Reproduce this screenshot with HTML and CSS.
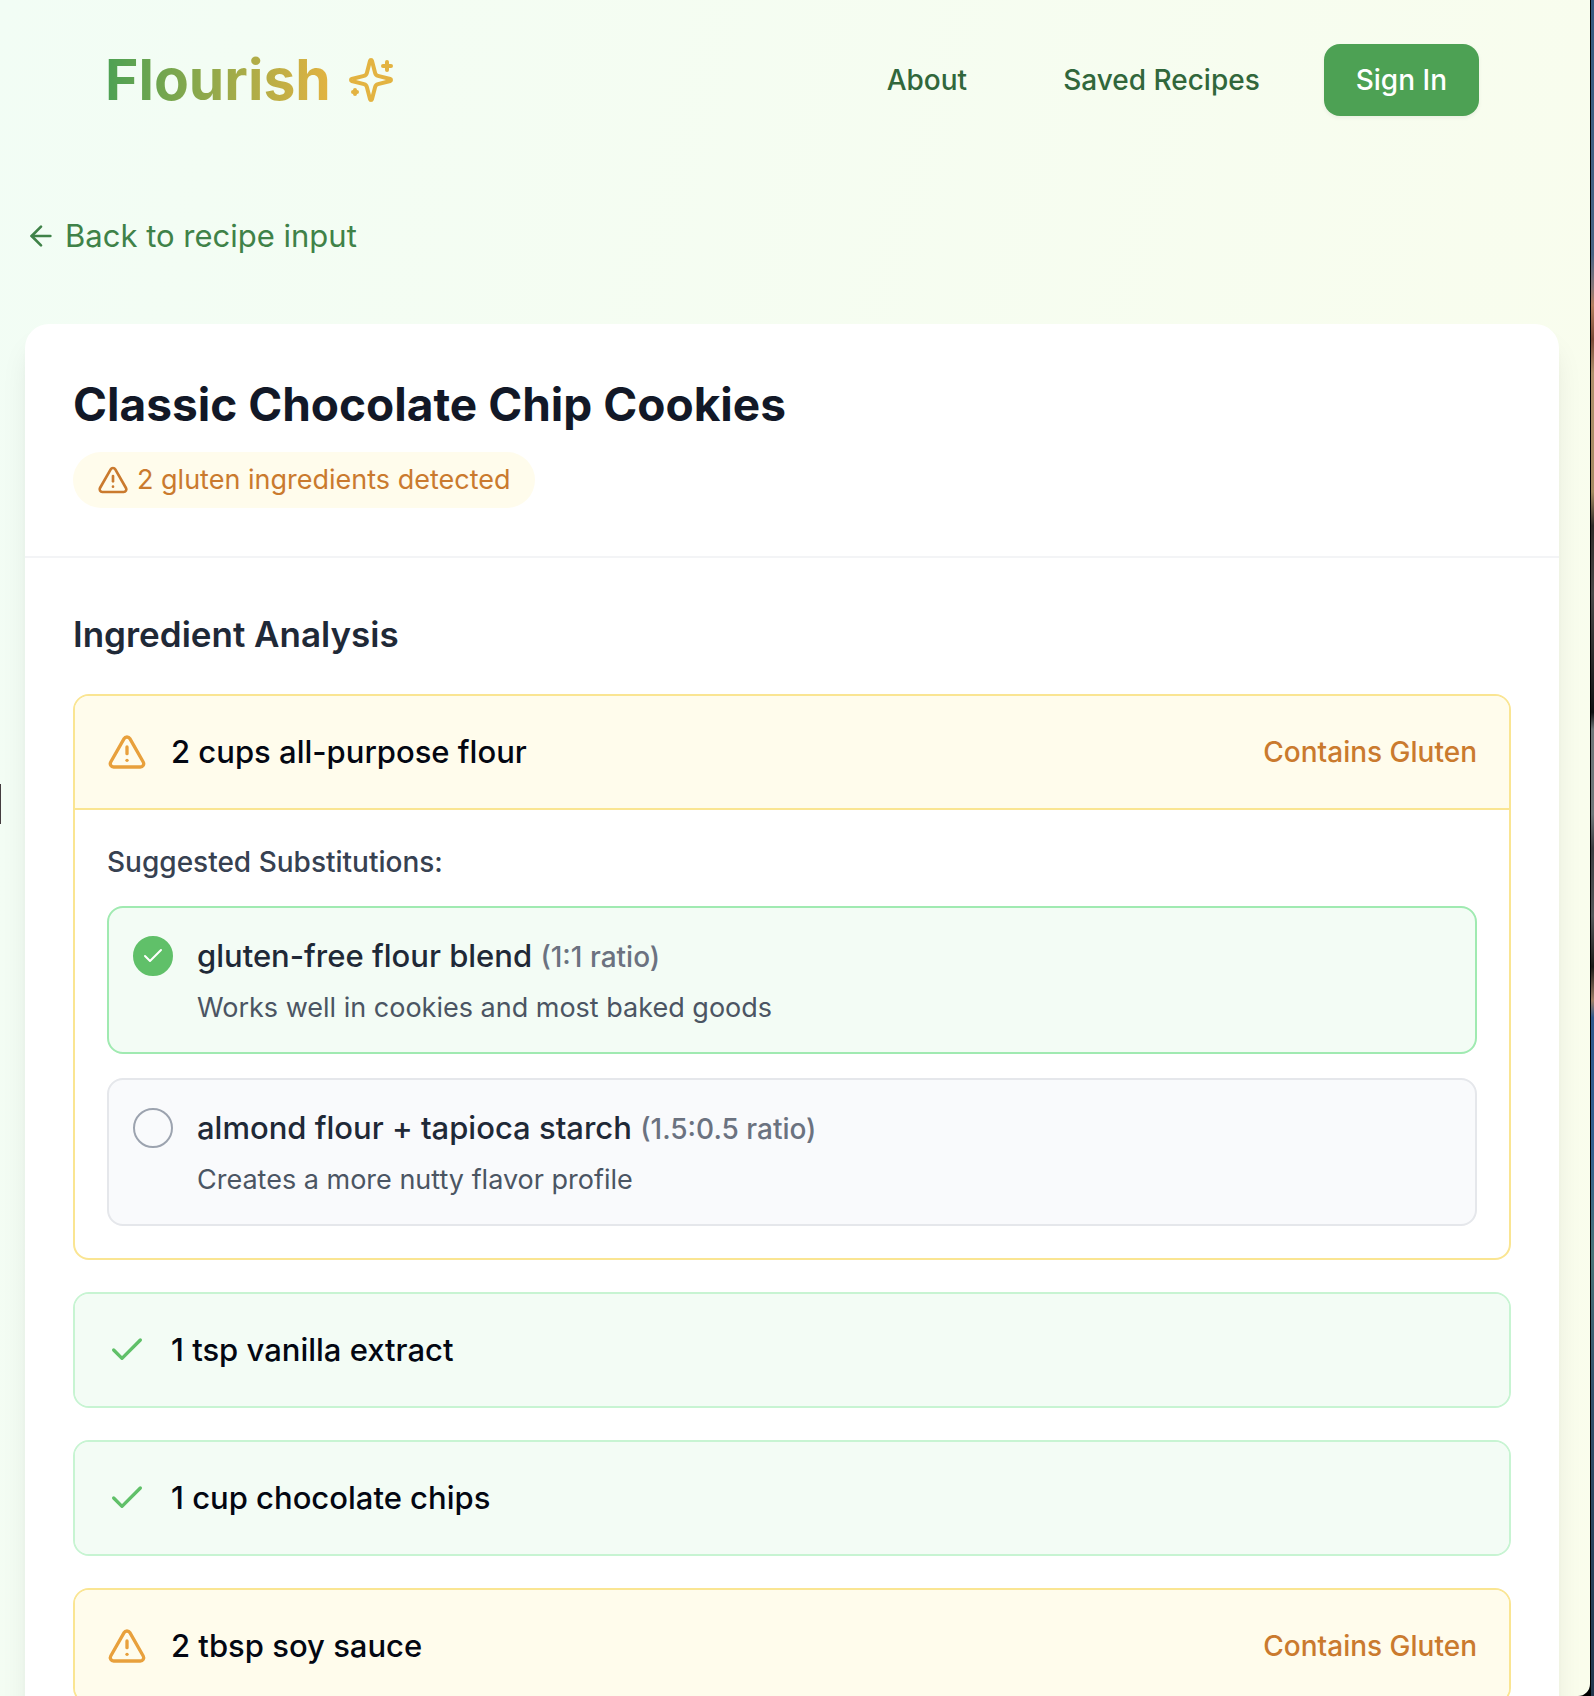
FILE: index.html
```html
<!DOCTYPE html>
<html lang="en">
<head>
<meta charset="utf-8">
<meta name="viewport" content="width=device-width, initial-scale=1">
<title>Flourish</title>
<link rel="stylesheet" href="styles.css">
</head>
<body>
<svg class="sprite" aria-hidden="true">
  <symbol id="warning" viewBox="0 0 24 24">
    <path d="m21.73 18-8-14a2 2 0 0 0-3.48 0l-8 14A2 2 0 0 0 4 21h16a2 2 0 0 0 1.73-3Z"/>
    <path d="M12 9v4"/><path d="M12 17h.01"/>
  </symbol>
  <symbol id="check" viewBox="0 0 24 24"><path d="M20 6 9 17l-5-5"/></symbol>
</svg>
<div class="window">
  <div class="page">
    <header class="header">
      <a class="logo" href="#">
        <span class="logo-text">Flourish</span>
        <svg class="icon icon-xl" viewBox="0 0 24 24" aria-hidden="true">
          <path d="M9.937 15.5A2 2 0 0 0 8.5 14.063l-6.135-1.582a.5.5 0 0 1 0-.962L8.5 9.936A2 2 0 0 0 9.937 8.5l1.582-6.135a.5.5 0 0 1 .963 0L14.063 8.5A2 2 0 0 0 15.5 9.937l6.135 1.581a.5.5 0 0 1 0 .964L15.5 14.063a2 2 0 0 0-1.437 1.437l-1.582 6.135a.5.5 0 0 1-.963 0z"/>
          <path d="M20 3v4"/><path d="M22 5h-4"/><path d="M4 17v2"/><path d="M5 18H3"/>
        </svg>
      </a>
      <nav class="nav">
        <a class="nav-link" href="#">About</a>
        <a class="nav-link" href="#">Saved Recipes</a>
        <button class="sign-in" type="button">Sign In</button>
      </nav>
    </header>
    <main class="main">
      <a class="back" href="#">
        <svg class="icon icon-md" viewBox="0 0 24 24" aria-hidden="true"><path d="m12 19-7-7 7-7"/><path d="M19 12H5"/></svg>
        Back to recipe input
      </a>
      <article class="card">
        <div class="card-head">
          <h1 class="title">Classic Chocolate Chip Cookies</h1>
          <p class="badge">
            <svg class="icon icon-md" aria-hidden="true"><use href="#warning"/></svg>
            2 gluten ingredients detected
          </p>
        </div>
        <section class="analysis">
          <h2 class="subtitle">Ingredient Analysis</h2>
          <ul class="ingredients">
            <li class="ingredient ingredient-warn">
              <div class="row">
                <svg class="icon icon-lg" aria-hidden="true"><use href="#warning"/></svg>
                <span class="name">2 cups all-purpose flour</span>
                <span class="flag">Contains Gluten</span>
              </div>
              <fieldset class="subs">
                <legend class="subs-label">Suggested Substitutions:</legend>
                <label class="option">
                  <span class="pick">
                    <input class="radio" type="radio" name="flour" checked>
                    <svg class="icon icon-sm" aria-hidden="true"><use href="#check"/></svg>
                  </span>
                  <span class="option-body">
                    <span class="option-name">gluten-free flour blend <span class="ratio">(1:1 ratio)</span></span>
                    <span class="note">Works well in cookies and most baked goods</span>
                  </span>
                </label>
                <label class="option">
                  <span class="pick">
                    <input class="radio" type="radio" name="flour">
                    <svg class="icon icon-sm" aria-hidden="true"><use href="#check"/></svg>
                  </span>
                  <span class="option-body">
                    <span class="option-name">almond flour + tapioca starch <span class="ratio">(1.5:0.5 ratio)</span></span>
                    <span class="note">Creates a more nutty flavor profile</span>
                  </span>
                </label>
              </fieldset>
            </li>
            <li class="ingredient ingredient-ok">
              <div class="row">
                <svg class="icon icon-lg" aria-hidden="true"><use href="#check"/></svg>
                <span class="name">1 tsp vanilla extract</span>
              </div>
            </li>
            <li class="ingredient ingredient-ok">
              <div class="row">
                <svg class="icon icon-lg" aria-hidden="true"><use href="#check"/></svg>
                <span class="name">1 cup chocolate chips</span>
              </div>
            </li>
            <li class="ingredient ingredient-warn">
              <div class="row">
                <svg class="icon icon-lg" aria-hidden="true"><use href="#warning"/></svg>
                <span class="name">2 tbsp soy sauce</span>
                <span class="flag">Contains Gluten</span>
              </div>
            </li>
          </ul>
        </section>
      </article>
    </main>
    <span class="edge-tab"></span>
  </div>
  <div class="desktop"></div>
</div>
</body>
</html>
```

FILE: styles.css
```css
*,
*::before,
*::after {
  box-sizing: border-box;
}

body,
h1,
h2,
p,
ul,
fieldset {
  margin: 0;
  padding: 0;
}

body {
  font-family: Inter, "Liberation Sans", sans-serif;
  font-size: 31px;
  line-height: 48px;
  color: #030712;
}

a {
  color: inherit;
  text-decoration: none;
}

.sprite {
  display: none;
}

/* The app window with a sliver of the desktop to its right */
.window {
  display: flex;
  height: 100vh;
  overflow: hidden;
  background: #000;
}

.page {
  position: relative;
  flex: 1;
  min-width: 0;
  overflow: hidden;
  padding: 0 31px 0 25px;
  background: linear-gradient(105deg, #f2fdf5, #fafdec);
  border-bottom-right-radius: 12px;
}

.desktop {
  width: 4px;
  border-left: 1px solid #000;
  background: linear-gradient(
    #355a80 0,
    #4a6484 15%,
    #8a7878 17%,
    #b5805f 18%,
    #7a4a38 20%,
    #b0906c 22%,
    #a58a62 29%,
    #2e2a28 31%,
    #4a4848 35%,
    #101012 42%,
    #6e7678 43%,
    #70777a 48%,
    #3c3c40 50%,
    #55585a 54%,
    #1c1a18 57%,
    #a08068 59%,
    #2f588c 60%,
    #35618f 68%,
    #4a7478 74%,
    #34516c 82%,
    #22374e 100%
  );
}

.edge-tab {
  position: absolute;
  left: 0;
  top: 784px;
  width: 1px;
  height: 40px;
  background: #453d40;
}

.icon {
  flex: none;
  fill: none;
  stroke: currentColor;
  stroke-width: 2;
  stroke-linecap: round;
  stroke-linejoin: round;
}

.icon-sm { width: 24px; height: 24px; }
.icon-md { width: 32px; height: 32px; }
.icon-lg { width: 40px; height: 40px; }
.icon-xl { width: 48px; height: 48px; }

.header {
  display: flex;
  align-items: center;
  justify-content: space-between;
  padding: 44px 80px;
}

.logo {
  display: flex;
  align-items: center;
  gap: 16px;
  color: #e3b341;
}

.logo-text {
  font-size: 57px;
  line-height: 72px;
  font-weight: 700;
  color: transparent;
  background: linear-gradient(to right, #4ca154, #e3b341);
  background-clip: text;
}

.nav {
  display: flex;
  align-items: center;
  gap: 32px;
  font-size: 28px;
  line-height: 40px;
  font-weight: 500;
  color: #31673b;
}

.nav-link {
  padding: 16px 32px;
}

.sign-in {
  padding: 16px 32px;
  border: 0;
  border-radius: 16px;
  background: #4da154;
  color: #fff;
  font: inherit;
  box-shadow: 0 2px 4px rgba(0, 0, 0, 0.06);
}

.main {
  padding-top: 52px;
}

.back {
  display: flex;
  align-items: center;
  gap: 8px;
  width: fit-content;
  margin-bottom: 64px;
  color: #3f8248;
}

.card {
  border-radius: 24px;
  background: #fff;
  box-shadow: 0 20px 30px -6px rgba(0, 0, 0, 0.1), 0 8px 12px -8px rgba(0, 0, 0, 0.1);
}

.card-head {
  padding: 48px;
  border-bottom: 2px solid #f3f4f6;
}

.title {
  margin-bottom: 16px;
  font-size: 46px;
  line-height: 64px;
  font-weight: 700;
  color: #121827;
}

.badge {
  display: flex;
  align-items: center;
  gap: 8px;
  width: fit-content;
  padding: 8px 24px;
  border-radius: 28px;
  background: #fffcec;
  font-size: 27px;
  line-height: 40px;
  color: #ca7a2e;
}

.analysis {
  padding: 48px;
}

.subtitle {
  margin-bottom: 32px;
  font-size: 35px;
  line-height: 56px;
  font-weight: 600;
  color: #1f2937;
}

.ingredients {
  display: flex;
  flex-direction: column;
  gap: 32px;
  list-style: none;
}

.ingredient {
  overflow: hidden;
  border: 2px solid;
  border-radius: 16px;
}

.ingredient-warn { border-color: #fae592; }
.ingredient-ok { border-color: #c7f4d2; }

.row {
  display: flex;
  align-items: center;
  gap: 24px;
  padding: 32px;
}

.ingredient-warn .row { background: #fffcec; }
.ingredient-ok .row { background: #f3fcf5; }
.ingredient-warn .icon-lg { color: #e8a03c; }
.ingredient-ok .icon-lg { color: #60c069; }

.name {
  flex: 1;
  font-weight: 500;
}

.flag {
  font-size: 28px;
  line-height: 40px;
  font-weight: 500;
  color: #ca7a2e;
}

.subs {
  display: flex;
  flex-direction: column;
  gap: 24px;
  min-width: 0;
  padding: 32px;
  border: 0;
  border-top: 2px solid #fae592;
}

.subs-label {
  float: left;
  padding: 0;
  font-size: 28px;
  line-height: 40px;
  font-weight: 500;
  color: #374151;
}

.option {
  display: flex;
  align-items: flex-start;
  gap: 24px;
  padding: 24px;
  border: 2px solid #e5e7eb;
  border-radius: 16px;
  background: #f9fafc;
}

.option:has(:checked) {
  border-color: #a0eab1;
  background: #f3fcf5;
}

.pick {
  display: grid;
  place-items: center;
  margin-top: 4px;
  color: #fff;
}

.pick > * {
  grid-area: 1 / 1;
}

.radio {
  appearance: none;
  width: 40px;
  height: 40px;
  margin: 0;
  border: 2px solid #9ca3af;
  border-radius: 50%;
}

.radio:checked {
  border-color: #60c069;
  background: #60c069;
}

.radio:not(:checked) + .icon {
  visibility: hidden;
}

.option-body {
  display: flex;
  flex-direction: column;
  gap: 8px;
}

.option-name {
  font-weight: 500;
  color: #1f2937;
}

.ratio {
  font-size: 28px;
  line-height: 40px;
  color: #6b7280;
}

.note {
  font-size: 27px;
  line-height: 40px;
  color: #4b5563;
}
```
